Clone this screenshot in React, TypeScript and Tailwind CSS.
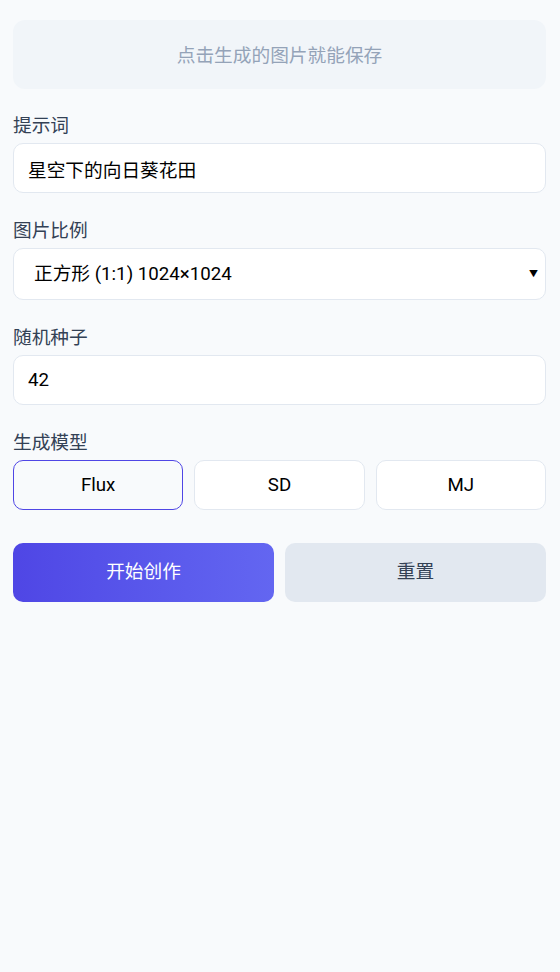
import { useState } from 'react';

const models = ['Flux', 'SD', 'MJ'];

export default function App() {
  const [prompt, setPrompt] = useState('星空下的向日葵花田');
  const [ratio, setRatio] = useState('1:1');
  const [seed, setSeed] = useState('42');
  const [model, setModel] = useState('Flux');

  const reset = () => {
    setPrompt('');
    setRatio('1:1');
    setSeed('42');
    setModel('Flux');
  };

  return (
    <main className="min-h-screen bg-[#f8fafc] pl-[13px] pr-[14px] pt-[20px] font-['Roboto','Noto_Sans_CJK_SC',sans-serif] text-[18.7px]">
      <div className="h-[69px] pt-[3px] rounded-[12px] bg-[#f1f5f9] flex items-center justify-center text-[#94a3b8]">
        点击生成的图片就能保存
      </div>

      <div className="mt-[22px]">
        <label className="block pt-[2px] leading-[27px] mb-[3px] text-[#334155]">提示词</label>
        <input
          value={prompt}
          onChange={(e) => setPrompt(e.target.value)}
          className="w-full h-[50px] px-[14px] bg-white border border-[#e2e8f0] rounded-[10px] text-black focus:outline-none"
        />
      </div>

      <div className="mt-[23px]">
        <label className="block pt-[2px] leading-[27px] mb-[3px] text-[#334155]">图片比例</label>
        <div className="relative">
          <select
            value={ratio}
            onChange={(e) => setRatio(e.target.value)}
            className="w-full h-[52px] pl-[20px] pr-8 appearance-none bg-white border border-[#e2e8f0] rounded-[10px] text-black focus:outline-none"
          >
            <option value="1:1">正方形 (1:1) 1024×1024</option>
            <option value="16:9">宽屏 (16:9) 1344×768</option>
            <option value="9:16">竖屏 (9:16) 768×1344</option>
          </select>
          <span className="pointer-events-none absolute right-[8px] top-1/2 -translate-y-1/2 text-[9px] leading-none text-black">▼</span>
        </div>
      </div>

      <div className="mt-[23px]">
        <label className="block pt-[2px] leading-[27px] mb-[3px] text-[#334155]">随机种子</label>
        <input
          value={seed}
          onChange={(e) => setSeed(e.target.value)}
          className="w-full h-[50px] px-[14px] bg-white border border-[#e2e8f0] rounded-[10px] text-black focus:outline-none"
        />
      </div>

      <div className="mt-[23px]">
        <label className="block pt-[2px] leading-[27px] mb-[3px] text-[#334155]">生成模型</label>
        <div className="grid grid-cols-3 gap-[11px]">
          {models.map((m) => (
            <button
              key={m}
              onClick={() => setModel(m)}
              className={
                model === m
                  ? 'h-[50px] rounded-[10px] border border-[#4f46e5] bg-[#f8fafc] text-black'
                  : 'h-[50px] rounded-[10px] border border-[#e2e8f0] bg-white text-black'
              }
            >
              {m}
            </button>
          ))}
        </div>
      </div>

      <div className="mt-[33px] grid grid-cols-2 gap-[11px]">
        <button className="h-[59px] rounded-[10px] bg-gradient-to-r from-[#4f46e5] to-[#6366f1] text-white">
          开始创作
        </button>
        <button onClick={reset} className="h-[59px] rounded-[10px] bg-[#e2e8f0] text-[#334155]">
          重置
        </button>
      </div>
    </main>
  );
}
